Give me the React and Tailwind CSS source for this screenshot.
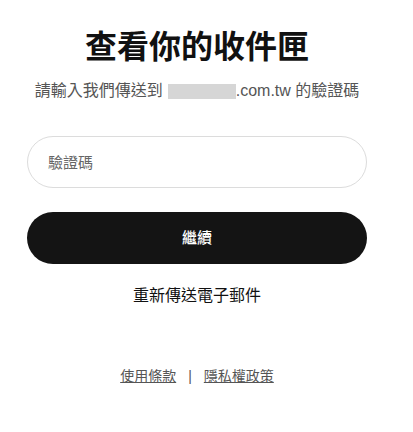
import { useState } from 'react';

const App = () => {
  const [code, setCode] = useState('');

  return (
    <div className="min-h-screen bg-white font-['Liberation_Sans','Noto_Sans_CJK_TC',sans-serif]">
      <div className="w-[394px] flex flex-col items-center px-[27px] pt-[27px]">
        {/* Title */}
        <h1 className="text-[32px] leading-[40px] font-semibold text-[#111]">查看你的收件匣</h1>
        <p className="mt-[14px] flex items-center whitespace-nowrap text-[16px] leading-[20px] text-[#555]">
          請輸入我們傳送到
          <span className="ml-[5px] inline-block w-[68px] h-[15px] bg-[#d6d6d6]"></span>
          .com.tw 的驗證碼
        </p>

        {/* Form */}
        <input
          type="text"
          value={code}
          onChange={(e) => setCode(e.target.value)}
          placeholder="驗證碼"
          className="mt-[35px] w-full h-[52px] px-[20px] rounded-full border border-[#dcdcdc] text-[15px] text-[#333] placeholder:text-[#666] outline-none"
        />
        <button
          type="button"
          className="mt-[24px] w-full h-[52px] rounded-full bg-[#141414] text-white text-[15px] font-medium"
        >
          繼續
        </button>

        <button type="button" className="mt-[20px] text-[16px] leading-[24px] text-[#111]">
          重新傳送電子郵件
        </button>

        {/* Footer links */}
        <div className="mt-[58px] flex items-center gap-[12px] text-[14px] leading-[20px] text-[#555]">
          <a href="#" className="underline">使用條款</a>
          <span>|</span>
          <a href="#" className="underline">隱私權政策</a>
        </div>
      </div>
    </div>
  );
};

export default App;
